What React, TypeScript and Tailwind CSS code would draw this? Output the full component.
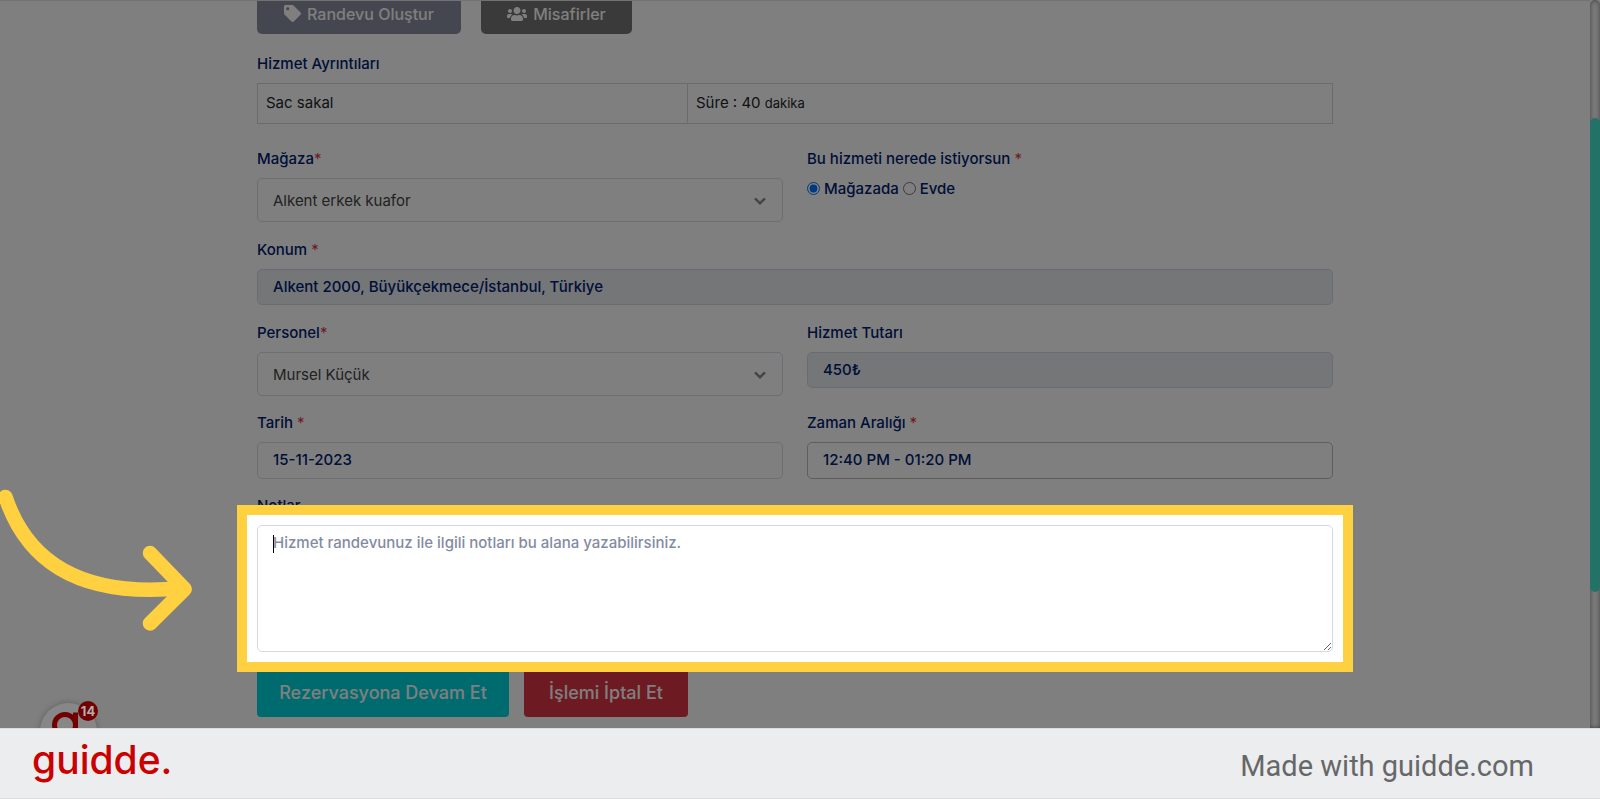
import { useState, type ReactNode } from "react";
import { FaTag, FaUsers } from "react-icons/fa";

const inputBase =
  "block w-full rounded-[5px] border px-[15px] pb-[2px] text-[15px] font-medium leading-6 text-[#00206f] outline-none";

function Label({
  htmlFor,
  children,
  required,
}: {
  htmlFor?: string;
  children: ReactNode;
  required?: boolean;
}) {
  return (
    <label htmlFor={htmlFor} className="mb-[7px] block font-medium leading-6 text-[#00206f]">
      {children}
      {required && <span className="font-normal text-[#dc3545]">*</span>}
    </label>
  );
}

function Select({ id, value }: { id: string; value: string }) {
  return (
    <div className="relative">
      <select
        id={id}
        className="block h-11 w-full appearance-none rounded-[5px] border border-[#dadbe8] bg-white px-[15px] pt-[2px] text-[15px] text-[#444444] outline-none"
      >
        <option>{value}</option>
      </select>
      <svg
        className="pointer-events-none absolute right-[17px] top-[19px]"
        width="12"
        height="9"
        viewBox="0 0 12 9"
        fill="none"
        stroke="#8a8a8a"
        strokeWidth="2.4"
      >
        <path d="M1 1.3 L6 6.4 L11 1.3" />
      </svg>
    </div>
  );
}

function Scrollbar() {
  return (
    <div className="flex w-[10px] shrink-0 flex-col rounded-t-[5px] bg-[#f5f5f5] pt-[118px] shadow-[inset_0_0_5px_#808080]">
      <div className="h-[474px] rounded-[5px] bg-[#46e4ce]" />
    </div>
  );
}

export default function App() {
  const [place, setPlace] = useState("store");
  return (
    <div className="flex h-screen flex-col font-['Inter',sans-serif] text-[15px]">
      <div className="relative flex min-h-0 flex-1 overflow-hidden bg-white">
        <main className="min-w-0 flex-1 border-t border-[#e4e4e4]">
          <form className="mx-auto max-w-[1076px]">
            <div className="flex gap-5 text-[16px] font-medium text-white">
              <button
                type="button"
                className="flex h-[33px] w-[204px] items-center justify-center gap-[6px] rounded-b-[5px] bg-[#888ea0] pb-2"
              >
                <FaTag className="size-[17px]" />
                Randevu Oluştur
              </button>
              <button
                type="button"
                className="flex h-[33px] w-[151px] items-center justify-center gap-[6px] rounded-b-[5px] bg-[#747474] pb-2"
              >
                <FaUsers className="size-[20px]" />
                Misafirler
              </button>
            </div>

            <h2 className="mb-[7px] mt-[18px] font-medium leading-6 text-[#00206f]">Hizmet Ayrıntıları</h2>
            <table className="w-full table-fixed border-collapse text-left text-[#212529]">
              <tbody>
                <tr className="h-10">
                  <td className="w-[40%] border border-[#d3d6d9] px-2">Sac sakal</td>
                  <td className="border border-[#d3d6d9] px-2">
                    Süre : 40 <span className="text-[13px]">dakika</span>
                  </td>
                </tr>
              </tbody>
            </table>

            <div className="mt-[23px] grid grid-cols-2 gap-x-6">
              <div>
                <Label htmlFor="store" required>
                  Mağaza
                </Label>
                <Select id="store" value="Alkent erkek kuafor" />
              </div>
              <fieldset className="font-medium text-[#00206f]">
                <legend className="leading-6">
                  Bu hizmeti nerede istiyorsun <span className="font-normal text-[#dc3545]">*</span>
                </legend>
                <div className="mt-[6px] flex h-6 items-center gap-1">
                  <input
                    id="in-store"
                    type="radio"
                    name="place"
                    className="mb-[2px] size-[13px]"
                    checked={place === "store"}
                    onChange={() => setPlace("store")}
                  />
                  <label htmlFor="in-store">Mağazada</label>
                  <input
                    id="at-home"
                    type="radio"
                    name="place"
                    className="mb-[2px] size-[13px]"
                    checked={place === "home"}
                    onChange={() => setPlace("home")}
                  />
                  <label htmlFor="at-home">Evde</label>
                </div>
              </fieldset>
            </div>

            <div className="mt-4">
              <Label htmlFor="location" required>
                Konum{" "}
              </Label>
              <input
                id="location"
                readOnly
                defaultValue="Alkent 2000, Büyükçekmece/İstanbul, Türkiye"
                className={`${inputBase} h-9 border-[#d4d8e6] bg-[#e9ecef]`}
              />
            </div>

            <div className="mt-4 grid grid-cols-2 gap-x-6">
              <div>
                <Label htmlFor="staff" required>
                  Personel
                </Label>
                <Select id="staff" value="Mursel Küçük" />
              </div>
              <div>
                <Label htmlFor="price">Hizmet Tutarı</Label>
                <input
                  id="price"
                  readOnly
                  defaultValue="450₺"
                  className={`${inputBase} h-9 border-[#d4d8e6] bg-[#e9ecef]`}
                />
              </div>
            </div>

            <div className="mt-[15px] grid grid-cols-2 gap-x-6">
              <div>
                <Label htmlFor="date" required>
                  Tarih{" "}
                </Label>
                <input
                  id="date"
                  defaultValue="15-11-2023"
                  className={`${inputBase} h-[37px] border-[#dadbe8] bg-white`}
                />
              </div>
              <div>
                <Label htmlFor="slot" required>
                  Zaman Aralığı{" "}
                </Label>
                <input
                  id="slot"
                  defaultValue="12:40 PM - 01:20 PM"
                  className={`${inputBase} h-[37px] border-[#bdbdbd] bg-white`}
                />
              </div>
            </div>

            <div className="mt-[15px]">
              <Label htmlFor="notes">Notlar</Label>
              <div className="relative">
                <textarea
                  id="notes"
                  placeholder="Hizmet randevunuz ile ilgili notları bu alana yazabilirsiniz."
                  className={`${inputBase} h-[127px] resize border-[#d4d8e6] bg-white pt-[5px] placeholder:text-[#838ba3]`}
                />
                <span className="absolute left-4 top-[10px] h-[18px] w-px bg-black" />
                <div className="pointer-events-none absolute -inset-5 border-10 border-[#ffd140] shadow-[0_0_0_2000px_rgba(0,0,0,0.5)]" />
              </div>
            </div>

            <div className="mt-[15px] flex gap-[15px] text-[18px] font-medium text-white">
              <button type="submit" className="h-[50px] w-[252px] rounded-[4px] bg-[#00d6dc]">
                Rezervasyona Devam Et
              </button>
              <button type="button" className="h-[50px] w-[164px] rounded-[4px] bg-[#dc3545]">
                İşlemi İptal Et
              </button>
            </div>
          </form>
        </main>
        <Scrollbar />

        <div className="absolute left-10 top-[703px] size-[57px] rounded-full bg-[#878787] shadow-[0_0_6px_rgba(0,0,0,0.25)]">
          <svg
            className="absolute left-3 top-2"
            width="28"
            height="40"
            viewBox="0 0 28 40"
            fill="none"
            stroke="#730000"
            strokeWidth="5"
          >
            <circle cx="13" cy="14" r="10.500" />
            <path d="M23.500 1.500 V27 C23.500 34 19 37 13 37 C9 37 6 35.500 4 33" />
          </svg>
          <span className="absolute -right-[1px] -top-[2px] size-5 rounded-full bg-[#730000] text-center text-[13px] font-bold leading-5 text-[#b0b0b0]">
            14
          </span>
        </div>

        <svg
          className="pointer-events-none absolute left-0 top-[470px]"
          width="200"
          height="170"
          viewBox="0 470 200 170"
          fill="none"
          stroke="#ffd140"
          strokeWidth="14.5"
          strokeLinecap="round"
          strokeLinejoin="round"
        >
          <path d="M5.5 497 C28 565 85 598 183 588" />
          <path d="M150 553 L184.700 589 L150 623.500" />
        </svg>
      </div>

      <footer className="flex h-[71px] shrink-0 items-center justify-between border-y border-[#dcdcdc] bg-[#ecedef] pl-8 pr-[66px]">
        <a href="#guidde" className="pb-2 text-[39px] font-medium leading-none text-[#cb0000]">
          guidde.
        </a>
        <p className="pt-[6px] font-['Roboto',sans-serif] text-[29px] leading-none text-[#666769]">
          Made with guidde.com
        </p>
      </footer>
    </div>
  );
}
